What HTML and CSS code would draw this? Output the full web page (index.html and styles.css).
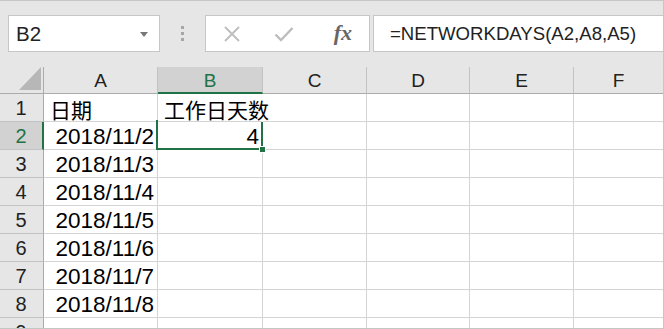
FILE: index.html
```html
<!DOCTYPE html>
<html lang="zh-CN">

<head>
    <meta charset="UTF-8">
    <meta name="viewport" content="width=device-width, initial-scale=1.0">
    <title>NETWORKDAYS</title>
    <link rel="stylesheet" href="styles.css">
</head>

<body>
    <div class="window">
        <!-- 编辑栏 -->
        <div class="formula-bar">
            <div class="name-box">
                <span>B2</span>
                <span class="caret"></span>
            </div>
            <div class="grip"><i></i><i></i><i></i></div>
            <div class="fx-buttons">
                <span class="fx-btn">
                    <svg width="18" height="16" viewBox="0 0 18 16">
                        <path d="M2 1 L16 15 M16 1 L2 15" stroke="#bdbdbd" stroke-width="1.8" fill="none" />
                    </svg>
                </span>
                <span class="fx-btn">
                    <svg width="20" height="16" viewBox="0 0 20 16">
                        <path d="M1.5 8.5 L7 14 L18.5 2" stroke="#bdbdbd" stroke-width="2.4" fill="none" />
                    </svg>
                </span>
                <span class="fx-btn fx">fx</span>
            </div>
            <div class="formula-input">=NETWORKDAYS(A2,A8,A5)</div>
        </div>

        <!-- 工作表 -->
        <div class="sheet">
            <div class="corner">
                <svg width="22" height="23" viewBox="0 0 22 23">
                    <polygon points="0,23 22,23 22,0" fill="#b7b7b7" />
                </svg>
            </div>
            <div class="col-head">A</div>
            <div class="col-head on">B</div>
            <div class="col-head">C</div>
            <div class="col-head">D</div>
            <div class="col-head">E</div>
            <div class="col-head last">F</div>

            <div class="row-head">1</div>
            <div class="cell text">日期</div>
            <div class="cell text spill">工作日天数</div>
            <div class="cell"></div>
            <div class="cell"></div>
            <div class="cell"></div>
            <div class="cell last"></div>

            <div class="row-head on">2</div>
            <div class="cell num">2018/11/2</div>
            <div class="cell num active">4</div>
            <div class="cell"></div>
            <div class="cell"></div>
            <div class="cell"></div>
            <div class="cell last"></div>

            <div class="row-head">3</div>
            <div class="cell num">2018/11/3</div>
            <div class="cell"></div>
            <div class="cell"></div>
            <div class="cell"></div>
            <div class="cell"></div>
            <div class="cell last"></div>

            <div class="row-head">4</div>
            <div class="cell num">2018/11/4</div>
            <div class="cell"></div>
            <div class="cell"></div>
            <div class="cell"></div>
            <div class="cell"></div>
            <div class="cell last"></div>

            <div class="row-head">5</div>
            <div class="cell num">2018/11/5</div>
            <div class="cell"></div>
            <div class="cell"></div>
            <div class="cell"></div>
            <div class="cell"></div>
            <div class="cell last"></div>

            <div class="row-head">6</div>
            <div class="cell num">2018/11/6</div>
            <div class="cell"></div>
            <div class="cell"></div>
            <div class="cell"></div>
            <div class="cell"></div>
            <div class="cell last"></div>

            <div class="row-head">7</div>
            <div class="cell num">2018/11/7</div>
            <div class="cell"></div>
            <div class="cell"></div>
            <div class="cell"></div>
            <div class="cell"></div>
            <div class="cell last"></div>

            <div class="row-head">8</div>
            <div class="cell num">2018/11/8</div>
            <div class="cell"></div>
            <div class="cell"></div>
            <div class="cell"></div>
            <div class="cell"></div>
            <div class="cell last"></div>

            <div class="row-head">9</div>
            <div class="cell"></div>
            <div class="cell"></div>
            <div class="cell"></div>
            <div class="cell"></div>
            <div class="cell"></div>
            <div class="cell last"></div>
        </div>
    </div>
</body>

</html>
```

FILE: styles.css
```css
html,
body {
    margin: 0;
    padding: 0;
}

body {
    font-family: "Liberation Sans", "Noto Sans CJK SC", sans-serif;
    color: #000;
    background: #e6e6e6;
}

.window {
    width: 664px;
    height: 329px;
    box-sizing: border-box;
    border-top: 1px solid #c6c6c6;
    border-right: 1px solid #c6c6c6;
    border-bottom: 1px solid #c6c6c6;
    overflow: hidden;
}

/* 编辑栏 */
.formula-bar {
    display: flex;
    align-items: stretch;
    height: 37px;
    margin-top: 14px;
    margin-bottom: 15px;
}

.name-box {
    width: 152px;
    margin-left: 8px;
    box-sizing: border-box;
    border: 1px solid #c6c6c6;
    background: #fff;
    display: flex;
    align-items: center;
    justify-content: space-between;
    padding: 0 11px 0 7px;
    font-size: 20.5px;
    color: #222;
}

/* 下拉箭头 */
.caret {
    width: 0;
    height: 0;
    border-top: 5px solid #777;
    border-left: 4.5px solid transparent;
    border-right: 4.5px solid transparent;
    margin-top: 1px;
}

.grip {
    width: 45px;
    display: flex;
    flex-direction: column;
    align-items: center;
    justify-content: center;
    gap: 3px;
}

.grip i {
    display: block;
    width: 3px;
    height: 3px;
    background: #a6a6a6;
}

.fx-buttons {
    width: 165px;
    box-sizing: border-box;
    border: 1px solid #c6c6c6;
    background: #fff;
    display: flex;
}

.fx-btn {
    flex: 1;
    display: flex;
    align-items: center;
    justify-content: center;
}

.fx {
    font-family: "Liberation Serif", "DejaVu Serif", serif;
    font-style: italic;
    font-weight: bold;
    font-size: 22px;
    color: #666;
    padding-left: 6px;
    padding-bottom: 2px;
}

.formula-input {
    flex: 1;
    margin-left: 3px;
    box-sizing: border-box;
    border: 1px solid #c6c6c6;
    border-right: none;
    background: #fff;
    display: flex;
    align-items: center;
    padding-left: 16px;
    font-size: 18.6px;
    color: #222;
    white-space: nowrap;
}

/* 工作表 */
.sheet {
    display: grid;
    grid-template-columns: 44px 114px 105px 104px 103px 104px 1fr;
    grid-template-rows: 27px repeat(9, 28px);
}

.corner,
.col-head,
.row-head {
    background: #e6e6e6;
    box-sizing: border-box;
    display: flex;
    align-items: center;
    justify-content: center;
    font-size: 19px;
    color: #222;
}

.corner {
    border-right: 1px solid #ababab;
    border-bottom: 1px solid #ababab;
    align-items: flex-end;
    justify-content: flex-end;
    padding: 0 2px 3px 0;
}

.col-head {
    border-bottom: 1px solid #ababab;
    border-right: 1px solid #c2c2c2;
    padding-top: 2px;
}

.col-head.last {
    border-right: none;
}

.col-head.on {
    background: #d2d2d2;
    color: #217346;
    border-bottom: 2px solid #217346;
    padding-top: 3px;
}

.row-head {
    border-right: 1px solid #ababab;
    border-bottom: 1px solid #c2c2c2;
    font-size: 20px;
    padding: 2px 1px 0 0;
}

.row-head.on {
    background: #d2d2d2;
    color: #217346;
    border-right: 2px solid #217346;
    padding-right: 0;
}

.cell {
    background: #fff;
    box-sizing: border-box;
    border-right: 1px solid #d4d4d4;
    border-bottom: 1px solid #d4d4d4;
    display: flex;
    align-items: center;
    padding: 2px 4px 0;
    font-size: 22.5px;
    white-space: nowrap;
    position: relative;
}

.cell.last {
    border-right: none;
}

.cell.text {
    font-size: 21px;
    padding-left: 6px;
}

/* 文字溢出到右侧单元格 */
.cell.spill {
    overflow: visible;
    z-index: 1;
    border-right-color: #fff;
}

.cell.num {
    justify-content: flex-end;
    padding-right: 3px;
}

/* 选中单元格 */
.cell.active::after {
    content: "";
    position: absolute;
    top: -2px;
    left: -2px;
    right: -1px;
    bottom: -1px;
    border: 2px solid #217346;
}

.cell.active::before {
    content: "";
    position: absolute;
    right: -4px;
    bottom: -4px;
    width: 5px;
    height: 5px;
    background: #217346;
    border: 1px solid #fff;
    z-index: 2;
}
```
